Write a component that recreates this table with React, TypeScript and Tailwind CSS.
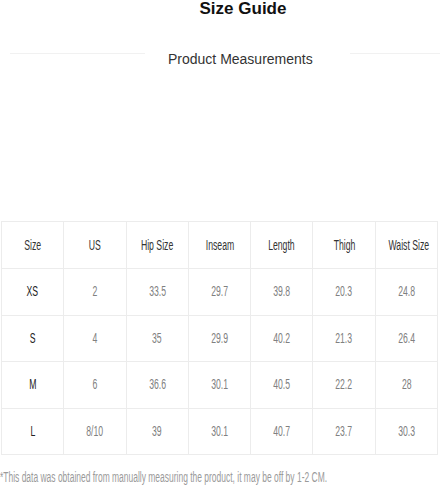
const headers = ["Size", "US", "Hip Size", "Inseam", "Length", "Thigh", "Waist Size"];

const rows = [
  ["XS", "2", "33.5", "29.7", "39.8", "20.3", "24.8"],
  ["S", "4", "35", "29.9", "40.2", "21.3", "26.4"],
  ["M", "6", "36.6", "30.1", "40.5", "22.2", "28"],
  ["L", "8/10", "39", "30.1", "40.7", "23.7", "30.3"],
];

const SizeGuide = () => {
  return (
    <div className="w-[440px] h-[488px] bg-white overflow-hidden font-['Liberation_Sans',Arial,sans-serif]">
      <div className="pl-[46px]">
        <h1 className="text-center text-[17px] leading-[17px] font-bold text-[#111]">Size Guide</h1>
      </div>
      <div className="flex items-start mt-[32px] pl-[10px]">
        <div className="w-[135px] h-px bg-[#f1f1f1] mt-[4px]" />
        <h2 className="ml-[23px] text-[14px] leading-[20px] font-medium text-[#333] whitespace-nowrap">
          Product Measurements
        </h2>
        <div className="flex-1 ml-[37px] h-px bg-[#f1f1f1] mt-[4px]" />
      </div>
      <table className="mt-[152px] ml-[1px] w-[437px] table-fixed border-collapse">
        <thead>
          <tr className="h-[47px]">
            {headers.map((h) => (
              <th key={h} className="border border-[#ececec] font-normal text-[14px] text-[#333] text-center p-0 whitespace-nowrap overflow-visible">
                <span className="inline-block scale-x-[0.62] whitespace-nowrap">{h}</span>
              </th>
            ))}
          </tr>
        </thead>
        <tbody>
          {rows.map((r) => (
            <tr key={r[0]} className="h-[46.5px]">
              {r.map((c, i) => (
                <td
                  key={i}
                  className={
                    i === 0
                      ? "border border-[#ececec] text-[14px] text-[#222] text-center p-0"
                      : "border border-[#ececec] text-[14px] text-[#808080] text-center p-0"
                  }
                >
                  <span className="inline-block scale-x-[0.62] whitespace-nowrap">{c}</span>
                </td>
              ))}
            </tr>
          ))}
        </tbody>
      </table>
      <p className="mt-[14px] text-[14px] leading-[17px] text-[#9a9a9a] whitespace-nowrap">
        <span className="inline-block origin-left scale-x-[0.605]">
          *This data was obtained from manually measuring the product, it may be off by 1-2 CM.
        </span>
      </p>
    </div>
  );
};

export default function App() {
  return <SizeGuide />;
}
